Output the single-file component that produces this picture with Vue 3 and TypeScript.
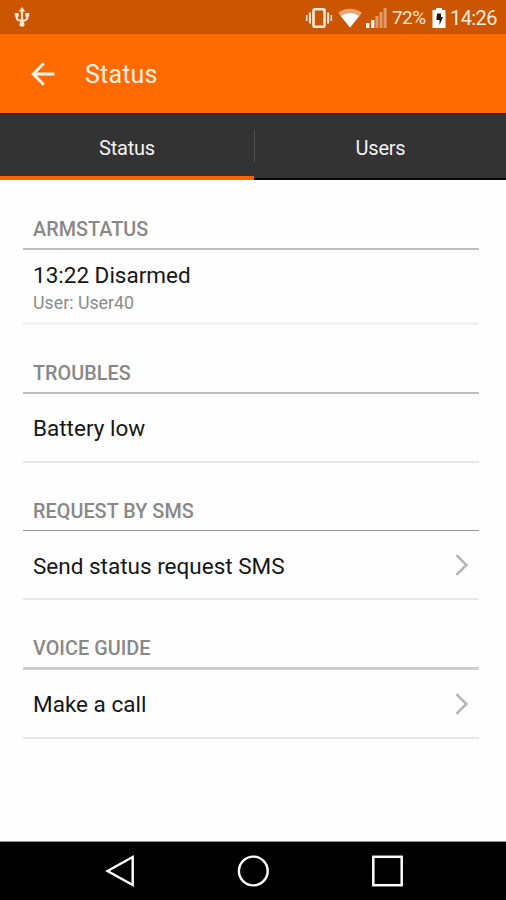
<script setup lang="ts">
interface Section {
  id: string
  heading: string
  title: string
  detail?: string
  link?: boolean
}

const sections: Section[] = [
  { id: 'arm', heading: 'ARMSTATUS', title: '13:22 Disarmed', detail: 'User: User40' },
  { id: 'troubles', heading: 'TROUBLES', title: 'Battery low' },
  { id: 'sms', heading: 'REQUEST BY SMS', title: 'Send status request SMS', link: true },
  { id: 'voice', heading: 'VOICE GUIDE', title: 'Make a call', link: true },
]
</script>

<template>
  <div class="screen">
    <div class="statusbar">
      <svg class="usb" width="16" height="20" viewBox="0 0 16 20">
        <path d="M8 3v14M2.8 8v3.2q0 1.8 5.2 2.8M13.2 8v3.2q0 1.8-5.2 2.8" fill="none" stroke="#ffe9dc" stroke-width="2.2" />
        <path d="M8 0l3.2 4.4H4.8zM.8 6h3.9v3.6H.8zM11.3 6h3.9v3.6h-3.9z" fill="#ffe9dc" />
        <circle cx="8" cy="17.3" r="2.5" fill="#ffe9dc" />
      </svg>
      <div class="tray">
        <svg class="vibrate" width="28" height="20" viewBox="0 0 28 20">
          <rect x="8.5" y="1.3" width="11" height="17.4" rx="1" fill="none" stroke="#ffeadd" stroke-width="2.6" />
          <path d="M4.9 4.5v11M23.1 4.5v11" stroke="#ffeadd" stroke-width="2" />
          <path d="M1.7 7v6M26.3 7v6" stroke="#ffeadd" stroke-width="1.6" />
        </svg>
        <svg class="wifi" width="24" height="20" viewBox="0 0 24 20">
          <path d="M0 4.8Q12-3.2 24 4.8L12 19.5z" fill="#e7a578" />
          <path d="M2.8 8Q12 1.8 21.2 8L12 19.5z" fill="#fff" />
        </svg>
        <svg class="signal" width="21" height="20" viewBox="0 0 21 20">
          <path d="M0 15h3.4v5H0zM5 12h3.4v8H5z" fill="#fff3eb" />
          <path d="M9.4 8h3v12h-3zM13.5 4h3v16h-3zM17.6 0h3v20h-3z" fill="#e39a69" />
        </svg>
        <span class="percent">72%</span>
        <svg class="battery" width="14" height="20" viewBox="0 0 14 20">
          <path d="M4 0h6v2h3.5v18H.5V2H4z" fill="#fff" />
          <path d="M5 5.5h4V9h2l-3.5 8v-5H4.4z" fill="#241408" />
        </svg>
        <span class="clock">14:26</span>
      </div>
    </div>

    <header class="appbar">
      <svg class="back" width="24" height="24" viewBox="0 0 24 24">
        <path d="M12.8 1.2L2.2 12l10.6 10.8M2.4 12h21" fill="none" stroke="#fff5ed" stroke-width="2.9" />
      </svg>
      <h1>Status</h1>
    </header>

    <nav class="tabs">
      <div class="tab active"><span>Status</span></div>
      <div class="tab"><span>Users</span></div>
    </nav>

    <main class="content">
      <section v-for="s in sections" :key="s.id" :class="s.id">
        <h2><span>{{ s.heading }}</span></h2>
        <div class="row">
          <div class="text">
            <div class="title"><span>{{ s.title }}</span></div>
            <div v-if="s.detail" class="detail"><span>{{ s.detail }}</span></div>
          </div>
          <svg v-if="s.link" width="14" height="22" viewBox="0 0 14 22">
            <path d="M1.4 1.2L11.4 11 1.4 20.8" fill="none" stroke="#b5b5b5" stroke-width="2.5" />
          </svg>
        </div>
      </section>
    </main>

    <footer class="navbar">
      <svg width="30" height="34" viewBox="0 0 30 34">
        <path d="M2.5 17L27.7 3v28z" fill="none" stroke="#fff" stroke-width="2.4" />
      </svg>
      <svg width="34" height="34" viewBox="0 0 34 34">
        <circle cx="17.3" cy="17" r="14.4" fill="none" stroke="#fff" stroke-width="2.4" />
      </svg>
      <svg width="34" height="34" viewBox="0 0 34 34">
        <rect x="3.3" y="2.8" width="28.4" height="28.4" fill="none" stroke="#fff" stroke-width="2.5" />
      </svg>
    </footer>
  </div>
</template>

<style>
body {
  margin: 0;
}
</style>

<style scoped>
.screen {
  display: flex;
  flex-direction: column;
  box-sizing: border-box;
  width: 506px;
  height: 900px;
  overflow: hidden;
  background: #fefefe;
  font-family: Roboto, "Liberation Sans", sans-serif;
}
.screen svg {
  display: block;
  flex: none;
}
.statusbar {
  display: flex;
  justify-content: space-between;
  height: 34px;
  background: #cb5500;
  color: #ffeadd;
}
.usb {
  margin: 7px 0 0 14px;
}
.tray {
  display: flex;
  align-items: flex-start;
  padding-top: 8px;
  padding-right: 9px;
  line-height: 20px;
}
.wifi {
  margin-left: 5px;
}
.signal {
  margin-left: 4px;
}
.percent {
  width: 34px;
  margin-left: 5px;
  font-size: 19px;
  letter-spacing: -0.6px;
}
.battery {
  margin-left: 6px;
}
.clock {
  width: 47px;
  margin-left: 4px;
  font-size: 20px;
  letter-spacing: -0.6px;
}
.appbar {
  display: flex;
  align-items: center;
  height: 79px;
  box-sizing: border-box;
  padding: 0 0 0 31px;
  background: #ff6b00;
}
.appbar h1 {
  margin: 3px 0 0 30px;
  color: #fff0e4;
  font-size: 25px;
  font-weight: 400;
  letter-spacing: 0.2px;
  line-height: 30px;
}
.tabs {
  display: flex;
  height: 67px;
  box-sizing: border-box;
  border-top: 1px solid #272718;
  background: #333;
}
.tab {
  display: flex;
  flex: 1;
  align-items: center;
  justify-content: center;
  box-sizing: border-box;
  padding-top: 3px;
  border-bottom: 2px solid #080808;
  color: #f2f2f2;
  font-size: 20px;
  letter-spacing: -0.2px;
}
.tab.active {
  flex: 0 0 254px;
  padding-top: 5px;
  border-bottom: 4px solid #fb6500;
}
.tab + .tab::before {
  align-self: flex-start;
  width: 1px;
  height: 32px;
  margin-top: 13px;
  margin-right: auto;
  background: #505050;
  content: "";
}
.tab + .tab span {
  margin-right: auto;
}
.content {
  flex: 1;
  padding: 0 27px 0 23px;
}
h2 {
  display: flex;
  align-items: flex-end;
  box-sizing: border-box;
  height: 69px;
  margin: 0;
  padding: 0 10px 7px;
  border-bottom: 2px solid #bdbdbd;
  color: #888;
  font-size: 19.8px;
  font-weight: 500;
  letter-spacing: 0.05px;
  line-height: 22px;
}
.row {
  display: flex;
  align-items: center;
  justify-content: space-between;
  box-sizing: border-box;
  height: 69px;
  padding: 0 10px;
  border-bottom: 2px solid #e8e8e8;
}
.title {
  color: #161616;
  font-size: 22.5px;
  line-height: 28px;
}
.detail {
  padding-top: 2px;
  color: #8c8c8c;
  font-size: 17.8px;
  line-height: 24px;
}
.arm h2 {
  height: 70px;
}
.arm .row {
  height: 75px;
  border-bottom: 3px solid #f0f0f0;
}
.arm .text {
  padding-top: 4px;
}
.sms h2 {
  height: 68px;
  border-bottom: 1px solid #999;
}
.sms .text {
  padding-top: 3px;
}
.voice h2 {
  height: 70px;
  border-bottom: 3px solid #cecece;
}
.navbar {
  display: flex;
  justify-content: space-between;
  box-sizing: border-box;
  height: 59px;
  padding: 12px 102px 0 105px;
  border-top: 1px solid #888;
  background: #000;
}
</style>
